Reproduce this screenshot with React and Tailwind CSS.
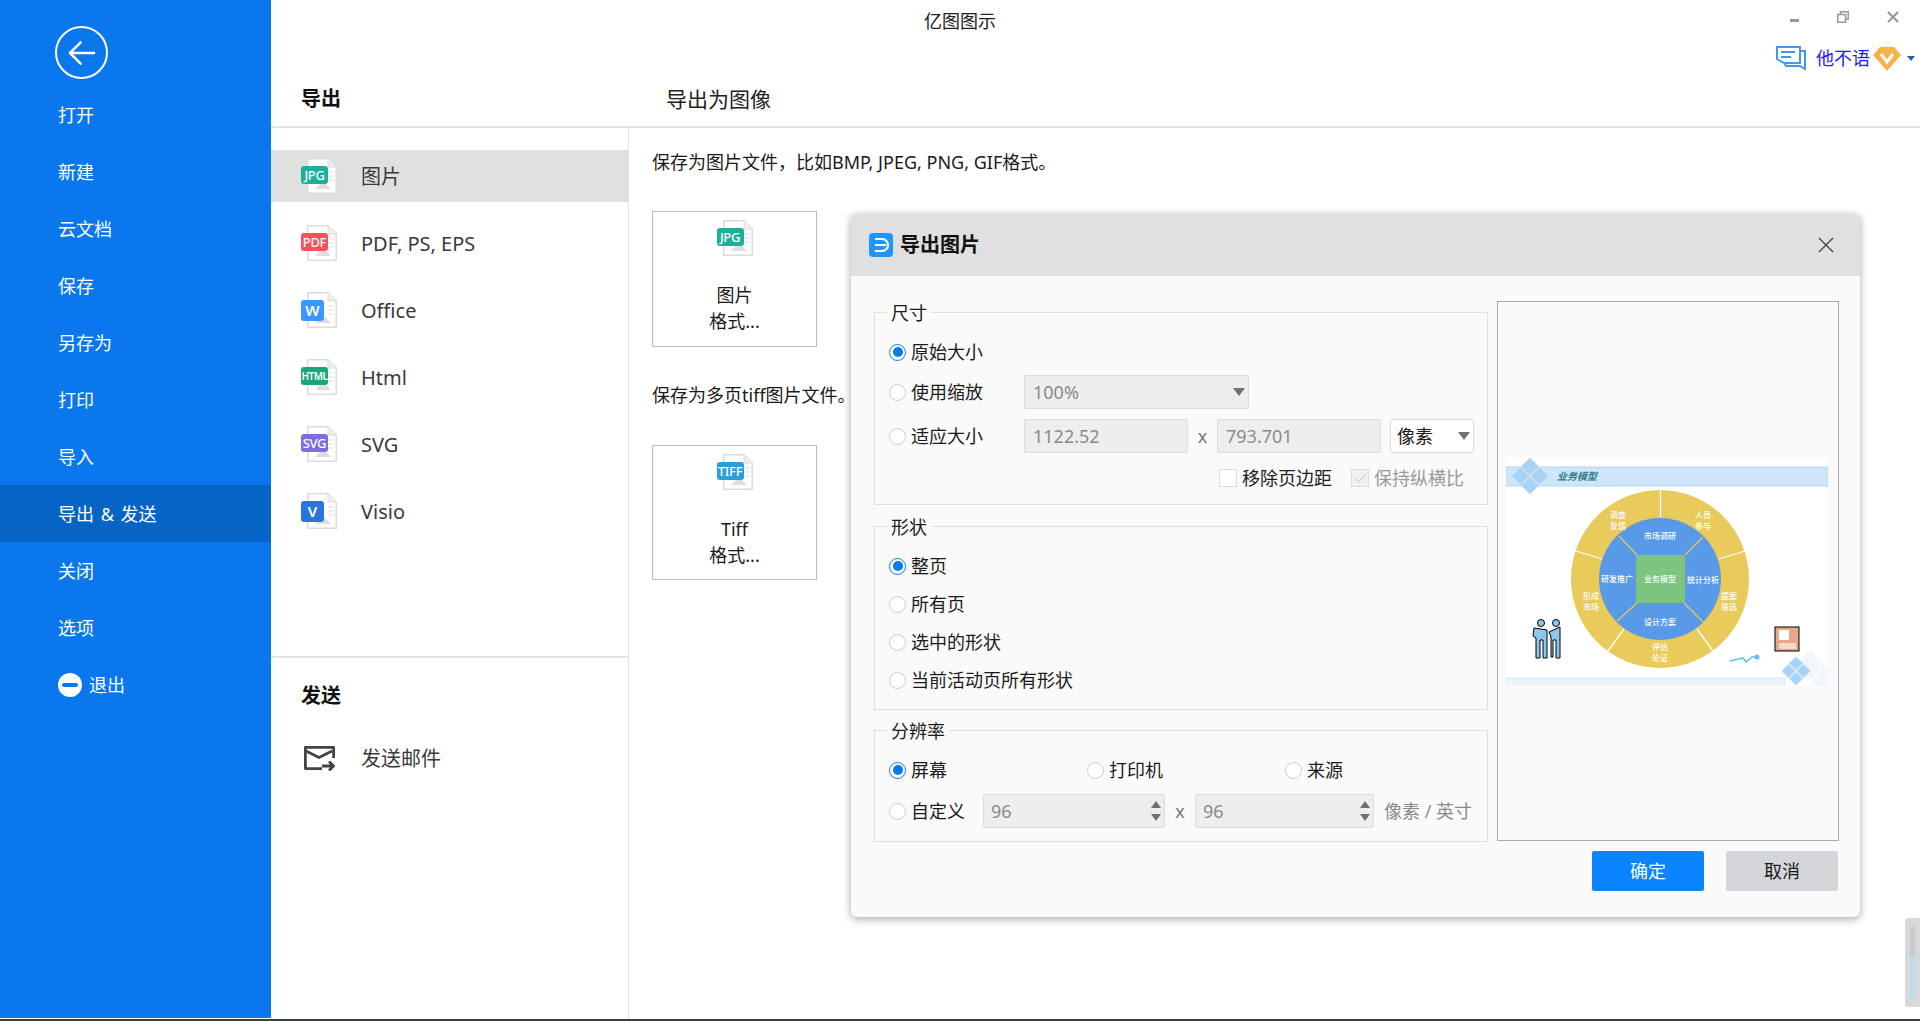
import { Check } from "lucide-react";

const font = "font-['Noto_Sans','Noto_Sans_CJK_SC',sans-serif]";

const menu = ["打开", "新建", "云文档", "保存", "另存为", "打印", "导入", "导出 & 发送", "关闭", "选项"];

const formats = [
  { name: "图片", badge: "JPG", color: "bg-[#1caf9a]", active: true },
  { name: "PDF, PS, EPS", badge: "PDF", color: "bg-[#f9515a]" },
  { name: "Office", badge: "W", color: "bg-[#3c96ff]", short: true },
  { name: "Html", badge: "HTML", color: "bg-[#16a878]", tight: true },
  { name: "SVG", badge: "SVG", color: "bg-[#7f6ce0]" },
  { name: "Visio", badge: "V", color: "bg-[#2b74dc]", short: true },
];

// file sheet with the coloured tag on top of it
function FileIcon({ badge, color, short, tight }) {
  let size = "h-[18px] w-[27px] text-[13px] font-medium tracking-tight";
  if (short) size = "h-[21px] w-[23px] text-[15px] font-semibold";
  if (tight) size = "h-[18px] w-[27px] text-[10px] font-semibold tracking-tighter";
  return (
    <div className="relative h-[36px] w-[36px] shrink-0">
      <svg viewBox="0 0 30 36" className="absolute left-[6px] top-0 h-[36px] w-[30px]">
        <path d="M.75.75H21L29.25 9V35.25H.75Z" fill="#fff" stroke="#dcdcdc" strokeWidth="1.5" />
        <path d="M21 .75V9H29.25" fill="#efefef" stroke="#dcdcdc" strokeWidth="1" />
        <path d="M8 31 16 23 24 31Z" fill="#dedede" />
        <path d="M21 14h6M21 18h6M21 22h6" stroke="#e0e0e0" strokeWidth="1.2" />
      </svg>
      <div className={`absolute left-0 top-[8px] flex items-center justify-center rounded-[3px] leading-none text-white ${color} ${size}`}>
        {badge}
      </div>
    </div>
  );
}

function Radio({ on, label, className = "" }) {
  return (
    <div className={`flex items-center gap-[5px] ${className}`}>
      <span className={`flex h-[17px] w-[17px] shrink-0 items-center justify-center rounded-full border bg-white ${on ? "border-[#0a7bed]" : "border-[#cccccc]"}`}>
        {on && <span className="h-[10px] w-[10px] rounded-full bg-[#0a7bed]" />}
      </span>
      <span className="whitespace-nowrap text-[18px] leading-[24px] text-[#1a1a1a]">{label}</span>
    </div>
  );
}

function Caret({ className = "" }) {
  return <span className={`h-0 w-0 border-x-[6px] border-t-[8px] border-x-transparent border-t-[#707070] ${className}`} />;
}

function Field({ value, className = "" }) {
  return (
    <div className={`flex h-[34px] items-center rounded-[2px] border border-[#dcdcdc] bg-[#eeeeee] px-[8px] text-[18px] leading-none text-[#8a8a8a] ${className}`}>
      {value}
    </div>
  );
}

function Spin({ className = "" }) {
  return (
    <div className={`flex h-[34px] items-center justify-between rounded-[2px] border border-[#dcdcdc] bg-[#eeeeee] pl-[7px] pr-[3px] text-[18px] leading-none text-[#8a8a8a] ${className}`}>
      96
      <span className="flex flex-col gap-[6px]">
        <span className="h-0 w-0 border-x-[5px] border-b-[7px] border-x-transparent border-b-[#707070]" />
        <span className="h-0 w-0 border-x-[5px] border-t-[7px] border-x-transparent border-t-[#707070]" />
      </span>
    </div>
  );
}

function Group({ title, className = "", children }) {
  return (
    <div className={`relative border border-[#dfdfdf] ${className}`}>
      <span className="absolute left-[12px] top-[-12px] bg-[#fafafa] px-[4px] text-[18px] leading-[24px] text-[#1a1a1a]">{title}</span>
      {children}
    </div>
  );
}

function Diamonds({ cx, cy, r }) {
  const d = (x, y) => `M${x} ${y - r} ${x + r} ${y} ${x} ${y + r} ${x - r} ${y}Z`;
  return (
    <g fill="#a9d3f5" stroke="#dff0fc" strokeWidth="1" strokeDasharray="1 1">
      <path d={d(cx, cy - r - 0.5)} />
      <path d={d(cx - r - 0.5, cy)} />
      <path d={d(cx + r + 0.5, cy)} />
      <path d={d(cx, cy + r + 0.5)} />
    </g>
  );
}

// the page thumbnail is itself a picture, so it stays one svg
function Preview() {
  const ring = [
    ["调查", "反馈", 1618, 518],
    ["人员", "参与", 1703, 518],
    ["提案", "筛选", 1729, 599],
    ["评估", "论证", 1660, 650],
    ["形成", "市场", 1591, 599],
  ];
  const inner = [
    ["市场调研", 1660, 539],
    ["统计分析", 1703, 583],
    ["设计方案", 1660, 625],
    ["研发推广", 1617, 582],
    ["业务模型", 1660, 582],
  ];
  return (
    <svg viewBox="1506 457 322 228" className="block h-[228px] w-[322px]" fontFamily="'Noto Sans CJK SC',sans-serif">
      <rect x="1506" y="457" width="322" height="228" fill="#fff" />
      <rect x="1506" y="467" width="322" height="19" fill="#cfe5fa" stroke="#b5d7f2" />
      <Diamonds cx={1530} cy={476} r={9} />
      <text x="1557" y="480" fontSize="10" fontWeight="700" fontStyle="italic" fill="#2f7f86">业务模型</text>
      <rect x="1506" y="678" width="279" height="8" fill="#eaf4fd" stroke="#cfe5fa" />
      <g fill="#eef6fd" opacity="0.8">
        <path d="M1810 650 1825 665 1810 680 1795 665Z" />
        <path d="M1825 665 1828 668 1828 685 1810 685Z" />
      </g>
      <Diamonds cx={1796} cy={671} r={7} />
      <circle cx="1660" cy="579" r="89" fill="#e8cb5a" />
      <g stroke="#fff" strokeWidth="1.3">
        <path d="M1660.5 490V517" />
        <path d="M1576 551 1602 559" />
        <path d="M1745 551 1719 559" />
        <path d="M1608 651 1624 629" />
        <path d="M1713 651 1697 629" />
      </g>
      <circle cx="1660" cy="579" r="61" fill="#5899e8" />
      <g stroke="#e8cb5a" strokeWidth="1.2">
        <path d="M1619 536 1637 555M1703 537 1685 555M1617 621 1637 603M1703 622 1684 603" />
      </g>
      <rect x="1636" y="555" width="49" height="48" fill="#7dc47e" />
      <g fill="#fff" fontSize="8" fontWeight="500" textAnchor="middle">
        {ring.map(([a, b, x, y]) => (
          <g key={a}>
            <text x={x} y={y}>{a}</text>
            <text x={x} y={y + 11}>{b}</text>
          </g>
        ))}
        {inner.map(([t, x, y]) => (
          <text key={t} x={x} y={y}>{t}</text>
        ))}
      </g>
      <g fill="#8cc7ee" stroke="#000" strokeWidth="1">
        <circle cx="1541" cy="623" r="3.5" />
        <circle cx="1556" cy="623" r="3.5" />
        <path d="M1534 628 1547 630V658H1543V640H1540V658H1536V638L1533 636Z" />
        <path d="M1549 632 1560 627V658H1556V640H1553V657H1551V637Z" />
      </g>
      <rect x="1775" y="627" width="24" height="24" fill="#e6a889" stroke="#000" strokeWidth="1" />
      <rect x="1779" y="630" width="10" height="10" fill="#fff" />
      <rect x="1779" y="643" width="17" height="6" fill="#f4d8c9" />
      <path d="M1730 661C1736 659 1740 659 1743 658L1746 662 1752 657 1756 657" fill="none" stroke="#5fbfea" strokeWidth="1.5" />
      <circle cx="1757" cy="657" r="2.5" fill="#5fbfea" />
    </svg>
  );
}

function Dialog() {
  return (
    <div className="absolute left-[851px] top-[214px] flex h-[703px] w-[1009px] flex-col overflow-hidden rounded-[6px] bg-[#fafafa] shadow-[0_2px_8px_rgba(0,0,0,0.35)]">
      <div className="flex h-[62px] shrink-0 items-center bg-[#e0e0e0] pl-[18px] pr-[26px]">
        <svg viewBox="0 0 24 24" className="h-[24px] w-[24px]">
          <rect width="24" height="24" rx="4" fill="#2196f6" />
          <path d="M6 6h7a6 6 0 0 1 0 12H6M6 12h11" fill="none" stroke="#fff" strokeWidth="2.2" />
        </svg>
        <span className="ml-[7px] text-[20px] font-bold leading-none text-[#111]">导出图片</span>
        <svg viewBox="0 0 16 16" className="ml-auto h-[16px] w-[16px]" fill="none" stroke="#444" strokeWidth="1.4">
          <path d="M1 1 15 15M15 1 1 15" />
        </svg>
      </div>
      <div className="flex flex-1 pl-[23px] pr-[21px] pt-[36px]">
        <div className="flex w-[614px] shrink-0 flex-col">
          <Group title="尺寸" className="h-[193px] pl-[14px] pr-[13px] pt-[27px]">
            <Radio on label="原始大小" />
            <div className="mt-[11px] flex items-center">
              <Radio label="使用缩放" className="w-[135px]" />
              <div className="flex h-[34px] w-[225px] items-center justify-between rounded-[2px] border border-[#dcdcdc] bg-[#eeeeee] pl-[8px] pr-[3px] text-[18px] leading-none text-[#8a8a8a]">
                100%
                <Caret />
              </div>
            </div>
            <div className="mt-[10px] flex items-center">
              <Radio label="适应大小" className="w-[135px]" />
              <Field value="1122.52" className="w-[164px]" />
              <span className="w-[29px] text-center text-[18px] text-[#777]">x</span>
              <Field value="793.701" className="w-[164px]" />
              <div className="ml-[9px] flex h-[34px] w-[84px] items-center justify-between rounded-[2px] border border-[#dcdcdc] bg-white pl-[6px] pr-[3px] text-[18px] leading-none text-[#1a1a1a]">
                像素
                <Caret />
              </div>
            </div>
            <div className="mt-[13px] flex items-center pl-[330px]">
              <span className="h-[18px] w-[18px] border border-[#dcdcdc] bg-white" />
              <span className="ml-[5px] text-[18px] leading-[24px] text-[#1a1a1a]">移除页边距</span>
              <span className="ml-[19px] flex h-[18px] w-[18px] items-center justify-center border border-[#dcdcdc] bg-[#f0f0f0]">
                <Check size={15} strokeWidth={1.2} className="text-[#b0b0b0]" />
              </span>
              <span className="ml-[5px] text-[18px] leading-[24px] text-[#999]">保持纵横比</span>
            </div>
          </Group>
          <Group title="形状" className="mt-[21px] flex h-[184px] flex-col gap-[14px] pl-[14px] pt-[27px]">
            <Radio on label="整页" />
            <Radio label="所有页" />
            <Radio label="选中的形状" />
            <Radio label="当前活动页所有形状" />
          </Group>
          <Group title="分辨率" className="mt-[20px] h-[112px] pl-[14px] pr-[13px] pt-[27px]">
            <div className="flex items-center">
              <Radio on label="屏幕" className="w-[198px]" />
              <Radio label="打印机" className="w-[198px]" />
              <Radio label="来源" />
            </div>
            <div className="mt-[12px] flex items-center">
              <Radio label="自定义" className="w-[94px]" />
              <Spin className="w-[182px]" />
              <span className="w-[30px] text-center text-[18px] text-[#777]">x</span>
              <Spin className="w-[179px]" />
              <span className="ml-[10px] whitespace-nowrap text-[18px] leading-none text-[#8a8a8a]">像素 / 英寸</span>
            </div>
          </Group>
        </div>
        <div className="ml-[9px] flex flex-1 flex-col">
          <div className="mt-[-11px] flex h-[540px] w-[342px] flex-col border border-[#aaaaaa] pl-[8px] pt-[155px]">
            <Preview />
          </div>
          <div className="mt-[10px] flex justify-end gap-[22px] pr-[1px]">
            <button className="h-[40px] w-[112px] rounded-[2px] bg-[#0a84ff] text-[18px] text-white">确定</button>
            <button className="h-[40px] w-[112px] rounded-[2px] bg-[#d5d6d9] text-[18px] text-[#1a1a1a]">取消</button>
          </div>
        </div>
      </div>
    </div>
  );
}

export default function App() {
  return (
    <div className={`relative flex h-[1021px] w-[1920px] overflow-hidden bg-white ${font}`}>
      {/* blue back-stage menu */}
      <aside className="flex h-[1018px] w-[271px] shrink-0 flex-col bg-[#0a77ed] text-white">
        <div className="ml-[55px] mt-[26px] flex h-[53px] w-[53px] items-center justify-center rounded-full border-2 border-white">
          <svg viewBox="0 0 24 24" className="h-[32px] w-[32px]" fill="none" stroke="#fff" strokeWidth="1.9" strokeLinecap="round" strokeLinejoin="round">
            <path d="M21 12H3M11 4l-8 8 8 8" />
          </svg>
        </div>
        <nav className="mt-[7px] flex flex-col">
          {menu.map((m) => (
            <div key={m} className={`flex h-[57px] items-center pl-[58px] text-[18px] leading-none [word-spacing:2px] ${m === "导出 & 发送" ? "bg-[#0664c6]" : ""}`}>
              {m}
            </div>
          ))}
          <div className="flex h-[57px] items-center pl-[58px] text-[18px] leading-none">
            <span className="relative mr-[7px] h-[24px] w-[24px] rounded-full bg-white">
              <span className="absolute left-[4px] top-[10px] h-[4px] w-[16px] rounded-full bg-[#0a77ed]" />
            </span>
            退出
          </div>
        </nav>
      </aside>

      <main className="flex min-w-0 flex-1 flex-col">
        <header className="relative flex h-[128px] shrink-0 flex-col border-b-2 border-[#e3e3e3]">
          <div className="flex h-[42px] items-center justify-center pr-[271px] text-[18px] text-[#222]">亿图图示</div>
          {/* window controls and account */}
          <div className="absolute right-[21px] top-[11px] flex items-start gap-[38px]">
            <span className="mt-[8px] h-[3px] w-[9px] bg-[#999]" />
            <svg viewBox="0 0 12 12" className="h-[12px] w-[12px]" fill="none" stroke="#999" strokeWidth="1.6">
              <path d="M3.5 3V.8H11.2V8H9M.8 3.5H8.5V11.2H.8Z" />
            </svg>
            <svg viewBox="0 0 12 12" className="h-[12px] w-[12px]" fill="none" stroke="#999" strokeWidth="2.2">
              <path d="M1 1 11 11M11 1 1 11" />
            </svg>
          </div>
          <div className="absolute right-[5px] top-[45px] flex items-center">
            <svg viewBox="0 0 30 26" className="h-[26px] w-[30px]" fill="none" stroke="#4197f2" strokeWidth="2">
              <path d="M1 2H24V18H8L1 14ZM24 6H29V24L24 21H10L8 18M5 7H19M5 12H15" />
            </svg>
            <span className="ml-[10px] text-[18px] leading-none text-[#1a1aff]">他不语</span>
            <svg viewBox="0 0 28 25" className="ml-[3px] h-[25px] w-[28px]">
              <path d="M7 1H21L28 9 14 25 0 9Z" fill="#f4b24a" />
              <path d="M8 8 14 16 20 8" fill="none" stroke="#fff" strokeWidth="3" />
            </svg>
            <span className="ml-[6px] h-0 w-0 border-x-[4px] border-t-[5px] border-x-transparent border-t-[#1f63b0]" />
          </div>
          <div className="mt-[46px] flex h-[22px] items-center">
            <span className="ml-[30px] w-[365px] text-[20px] font-bold leading-none text-[#111]">导出</span>
            <span className="text-[21px] leading-none text-[#222]">导出为图像</span>
          </div>
        </header>
        <div className="flex min-h-0 flex-1">
          <section className="flex w-[358px] shrink-0 flex-col border-r border-[#e3e3e3]">
            <div className="mt-[22px] flex h-[508px] flex-col border-b-2 border-[#e3e3e3]">
              {formats.map((f) => (
                <div key={f.name} className={`mb-[15px] flex h-[52px] items-center pl-[30px] ${f.active ? "bg-[#e0e0e0]" : ""}`}>
                  <FileIcon badge={f.badge} color={f.color} short={f.short} tight={f.tight} />
                  <span className="ml-[24px] mt-[2px] text-[20px] leading-none text-[#3a3a3a]">{f.name}</span>
                </div>
              ))}
            </div>
            <div className="mt-[26px] pl-[30px] text-[20px] font-bold leading-[24px] text-[#111]">发送</div>
            <div className="mt-[38px] flex items-center pl-[33px]">
              <svg viewBox="0 0 31 25" className="h-[25px] w-[31px]" fill="none" stroke="#444" strokeWidth="2.8" strokeLinejoin="round">
                <path d="M18 22.6H1.4V1.4H29.6V12" />
                <path d="M2 5 15 11.5 28 5" />
                <path d="M18 20H29M25 15.5 29.5 20 25 24.5" />
              </svg>
              <span className="ml-[26px] text-[20px] leading-none text-[#3a3a3a]">发送邮件</span>
            </div>
          </section>
          <section className="flex-1 pl-[23px] pt-[21px] text-[18px] text-[#1a1a1a]">
            <p className="leading-[26px]">保存为图片文件，比如BMP, JPEG, PNG, GIF格式。</p>
            <div className="mt-[36px] flex h-[136px] w-[165px] flex-col items-center border border-[#bbbbbb] pt-[8px] leading-[26px]">
              <FileIcon badge="JPG" color="bg-[#1caf9a]" />
              <span className="mt-[26px]">图片</span>
              <span>格式...</span>
            </div>
            <p className="mt-[35px] leading-[26px]">保存为多页tiff图片文件。</p>
            <div className="mt-[37px] flex h-[135px] w-[165px] flex-col items-center border border-[#bbbbbb] pt-[8px] leading-[26px]">
              <FileIcon badge="TIFF" color="bg-[#2a9fd8]" />
              <span className="mt-[26px]">Tiff</span>
              <span>格式...</span>
            </div>
          </section>
        </div>
      </main>

      <Dialog />

      {/* thumbnail strip cut off at the window corner */}
      <div className="absolute right-0 top-[918px] flex h-[89px] w-[15px] justify-center rounded-l-[3px] bg-[#d6d8da] py-[8px]">
        <div className="flex h-full w-[5px] flex-col bg-[#c8cccf]">
          <div className="h-[30px]" />
          <div className="flex-1 bg-[#bcdcec]" />
        </div>
      </div>
      <div className="absolute inset-x-0 bottom-0 h-[2px] bg-[#3a3f44]" />
    </div>
  );
}
